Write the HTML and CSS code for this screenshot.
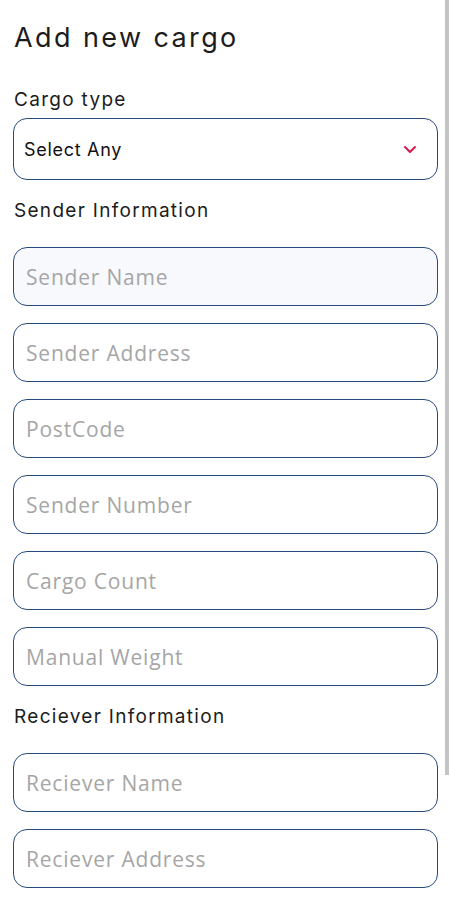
FILE: index.html
```html
<!DOCTYPE html>
<html lang="en">
<head>
    <meta charset="UTF-8">
    <meta name="viewport" content="width=device-width, initial-scale=1.0">
    <title>Add new cargo</title>
    <link rel="stylesheet" href="styles.css">
</head>
<body>
    <main class="cargo-form">
        <h1 class="page-title">Add new cargo</h1>

        <label class="section-label label-select" for="cargo-type">Cargo type</label>
        <div class="select-box" id="cargo-type">
            <span class="select-value">Select Any</span>
            <svg class="select-arrow" width="14" height="9" viewBox="0 0 14 9">
                <path d="M2 2 L7 7 L12 2" fill="none" stroke="#d61a4f" stroke-width="2" stroke-linecap="round" stroke-linejoin="round"/>
            </svg>
        </div>

        <h2 class="section-label">Sender Information</h2>
        <div class="field-list">
            <input type="text" class="field field-active" placeholder="Sender Name">
            <input type="text" class="field" placeholder="Sender Address">
            <input type="text" class="field" placeholder="PostCode">
            <input type="text" class="field" placeholder="Sender Number">
            <input type="text" class="field" placeholder="Cargo Count">
            <input type="text" class="field" placeholder="Manual Weight">
        </div>

        <h2 class="section-label">Reciever Information</h2>
        <div class="field-list">
            <input type="text" class="field" placeholder="Reciever Name">
            <input type="text" class="field" placeholder="Reciever Address">
        </div>
    </main>

    <div class="scroll-thumb"></div> <!-- scroll indicator -->
</body>
</html>
```

FILE: styles.css
```css
/* General Styles */
body {
    margin: 0;
    padding: 0;
    background-color: #ffffff;
    font-family: 'Inter', 'Noto Sans', sans-serif;
    color: #1a1a1a;
    overflow: hidden;
}

.cargo-form {
    display: flex;
    flex-direction: column;
    padding: 21px 12px 0 13px;
}

.page-title {
    margin: 0 0 0 1px;
    font-size: 27px;
    font-weight: 400;
    line-height: 34px;
    letter-spacing: 2.4px;
    color: #1c1c1c;
}

.section-label {
    display: block;
    margin: 19px 0 24px 1px;
    font-size: 19px;
    font-weight: 400;
    line-height: 24px;
    letter-spacing: 1.3px;
    color: #1c1c1c;
}

.label-select {
    margin-top: 33px;
    margin-bottom: 6px;
}

/* Select */
.select-box {
    display: flex;
    align-items: center;
    justify-content: space-between;
    height: 62px;
    padding: 0 20px 0 10px;
    border: 1.5px solid #274a7c;
    border-radius: 14px;
    box-sizing: border-box;
    cursor: pointer;
}

.select-value {
    font-size: 18px;
    letter-spacing: 0.7px;
    color: #111111;
}

/* Inputs */
.field-list {
    display: flex;
    flex-direction: column;
    gap: 17px;
}

.field {
    height: 59px;
    padding: 0 12px;
    border: 1.5px solid #274a7c;
    border-radius: 14px;
    box-sizing: border-box;
    background-color: #ffffff;
    font-family: 'Open Sans', sans-serif;
    font-size: 21px;
    letter-spacing: 0.8px;
    color: #222222;
    outline: none;
}

.field::placeholder {
    color: #a6a6a6;
}

.field-active {
    background-color: #f7f9fc;
}

.scroll-thumb {
    position: absolute;
    top: 0;
    right: 1px;
    width: 4px;
    height: 775px;
    background-color: #c4c4c4;
}
```
